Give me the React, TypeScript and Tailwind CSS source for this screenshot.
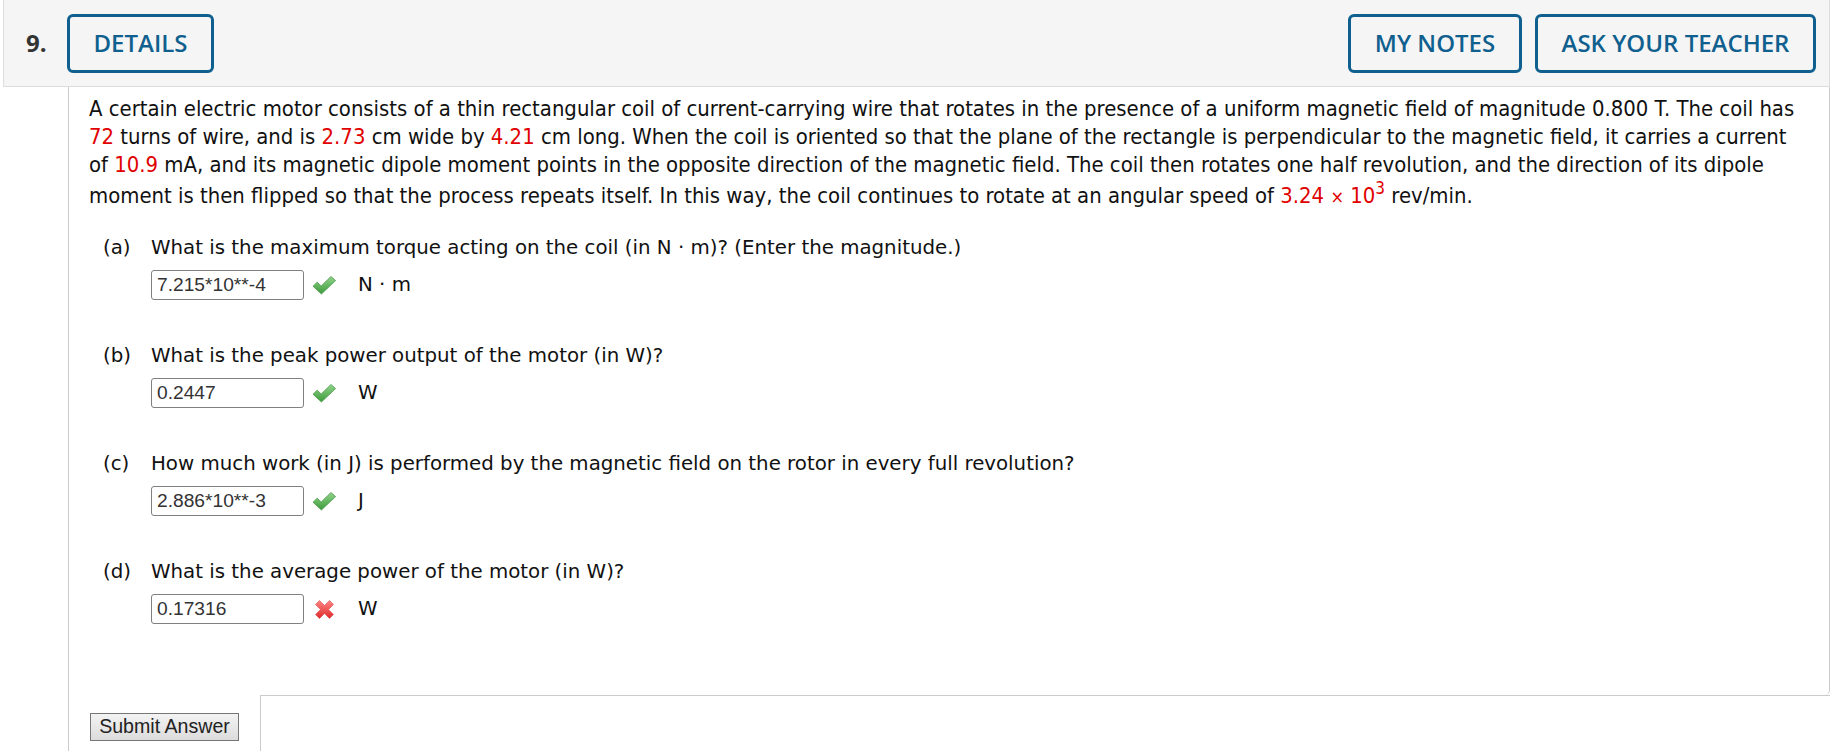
import React from "react";

const red = "text-[#e00000]";

function CheckIcon() {
  return (
    <svg width="25" height="20" viewBox="0 0 25 20" className="shrink-0">
      <defs>
        <linearGradient id="ck" x1="0" y1="0" x2="0" y2="1">
          <stop offset="0" stopColor="#92d48c" />
          <stop offset="1" stopColor="#3c9a3b" />
        </linearGradient>
      </defs>
      <path
        d="M1 11.2 L5.2 7.2 L9.2 11 L19 1.5 L23.6 5.6 L9.4 19 Z"
        fill="url(#ck)"
        stroke="#4b9a48"
        strokeWidth="0.8"
        strokeLinejoin="round"
      />
    </svg>
  );
}

function CrossIcon() {
  return (
    <svg width="21" height="21" viewBox="0 0 21 21" className="shrink-0">
      <defs>
        <linearGradient id="cx" x1="0" y1="0" x2="0" y2="1">
          <stop offset="0" stopColor="#ff8585" />
          <stop offset="1" stopColor="#de2a2a" />
        </linearGradient>
      </defs>
      <path
        d="M1.5 5.5 L5.5 1.5 L10.5 6.5 L15.5 1.5 L19.5 5.5 L14.5 10.5 L19.5 15.5 L15.5 19.5 L10.5 14.5 L5.5 19.5 L1.5 15.5 L6.5 10.5 Z"
        fill="url(#cx)"
        stroke="#d84646"
        strokeWidth="0.6"
        strokeLinejoin="round"
      />
    </svg>
  );
}

function HeaderButton({ label, width }: { label: string; width: string }) {
  return (
    <button
      className={`${width} flex h-[59px] items-center justify-center rounded-[6px] border-[3px] border-[#10608f] font-['Open_Sans',sans-serif] text-[24px] font-semibold text-[#10608f]`}
    >
      {label}
    </button>
  );
}

interface Part {
  key: string;
  question: React.ReactNode;
  answer: string;
  unit: string;
  correct: boolean;
}

const parts: Part[] = [
  {
    key: "a",
    question: "What is the maximum torque acting on the coil (in N · m)? (Enter the magnitude.)",
    answer: "7.215*10**-4",
    unit: "N · m",
    correct: true,
  },
  {
    key: "b",
    question: "What is the peak power output of the motor (in W)?",
    answer: "0.2447",
    unit: "W",
    correct: true,
  },
  {
    key: "c",
    question: "How much work (in J) is performed by the magnetic field on the rotor in every full revolution?",
    answer: "2.886*10**-3",
    unit: "J",
    correct: true,
  },
  {
    key: "d",
    question: "What is the average power of the motor (in W)?",
    answer: "0.17316",
    unit: "W",
    correct: false,
  },
];

export default function App() {
  return (
    <div className="h-[751px] w-[1840px] overflow-hidden bg-white text-[#111]">
      {/* header */}
      <div className="ml-[3px] mr-[10px] flex h-[87px] items-center border-x border-b border-[#dddddd] bg-[#f5f5f5] pl-[22px] pr-[13px]">
        <span className="w-[41px] font-['Open_Sans',sans-serif] text-[24px] font-bold text-[#333]">9.</span>
        <HeaderButton label="DETAILS" width="w-[147px]" />
        <div className="flex-1" />
        <div className="flex gap-[13px]">
          <HeaderButton label="MY NOTES" width="w-[174px]" />
          <HeaderButton label="ASK YOUR TEACHER" width="w-[281px]" />
        </div>
      </div>

      {/* question body */}
      <div className="ml-[68px] mr-[10px] border-l border-[#cccccc]">
        <div className="rounded-br-[5px] border-r border-[#cccccc] pb-[71px] pl-[20px] pt-[8px]">
          <div className="whitespace-nowrap font-['DejaVu_Sans_Condensed','DejaVu_Sans',sans-serif] text-[21.9px] font-stretch-condensed">
            <div className="h-[28px] leading-[28px]">
              A certain electric motor consists of a thin rectangular coil of current-carrying wire that rotates in the presence of a uniform magnetic field of magnitude 0.800 T. The coil has
            </div>
            <div className="h-[28px] leading-[28px]">
              <span className={red}>72</span> turns of wire, and is <span className={red}>2.73</span> cm wide by{" "}
              <span className={red}>4.21</span> cm long. When the coil is oriented so that the plane of the rectangle is perpendicular to the magnetic field, it carries a current
            </div>
            <div className="h-[28px] leading-[28px]">
              of <span className={red}>10.9</span> mA, and its magnetic dipole moment points in the opposite direction of the magnetic field. The coil then rotates one half revolution, and the direction of its dipole
            </div>
            <div className="mt-[3px] h-[28px] leading-[28px]">
              moment is then flipped so that the process repeats itself. In this way, the coil continues to rotate at an angular speed of{" "}
              <span className={red}>
                3.24 <span className="text-[18px]">×</span> 10
                <span className="relative -top-[9px] text-[17px] leading-none">3</span>
              </span>{" "}
              rev/min.
            </div>
          </div>

          {/* parts */}
          <div className="ml-[14px] mt-[24px] font-['DejaVu_Sans',Verdana,sans-serif] text-[19.8px]">
            {parts.map((p, i) => (
              <div key={p.key} className={i > 0 ? "mt-[42px]" : ""}>
                <div className="flex h-[27px] leading-[27px]">
                  <span className="w-[48px]">({p.key})</span>
                  <span>{p.question}</span>
                </div>
                <div className="ml-[48px] mt-[9px] flex h-[30px] items-center">
                  <input
                    readOnly
                    value={p.answer}
                    className="h-[30px] w-[153px] rounded-[3px] border border-[#808080] bg-white px-[5px] font-['Liberation_Sans',Arial,sans-serif] text-[19.2px] text-[#333] outline-none"
                  />
                  <div className="ml-[8px] flex w-[25px] justify-center">
                    {p.correct ? <CheckIcon /> : <CrossIcon />}
                  </div>
                  <span className="ml-[21px]">{p.unit}</span>
                </div>
              </div>
            ))}
          </div>
        </div>

        {/* bottom row */}
        <div className="flex h-[60px]">
          <div className="w-[191px] pl-[21px] pt-[18px]">
            <button className="h-[28px] w-[149px] border border-[#767676] bg-gradient-to-b from-[#f3f3f3] to-[#dcdcdc] font-['Liberation_Sans',Arial,sans-serif] text-[19.6px] leading-none text-[#222]">
              Submit Answer
            </button>
          </div>
          <div className="flex-1 border-l border-t border-[#cccccc]" />
        </div>
      </div>
    </div>
  );
}
